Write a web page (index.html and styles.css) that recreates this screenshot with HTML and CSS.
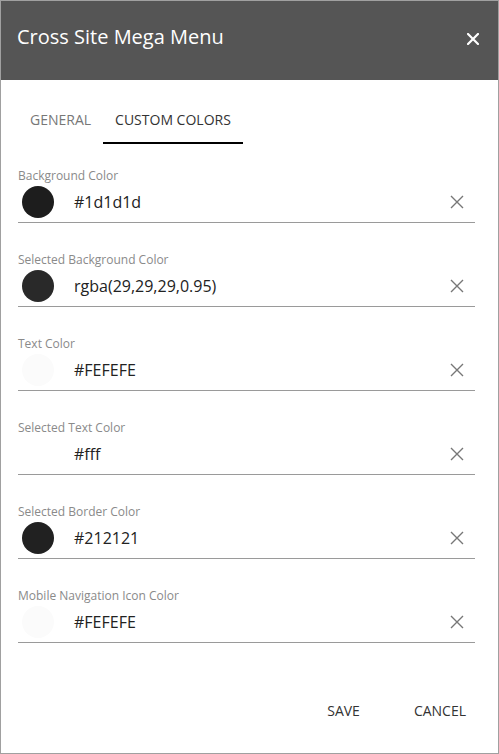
FILE: index.html
```html
<!DOCTYPE html>
<html>
<head>
<meta charset="utf-8">
<link rel="stylesheet" href="styles.css">
</head>
<body>
<div class="dialog">
  <header class="header">
    <h1 class="title">Cross Site Mega Menu</h1>
    <svg class="close" width="12" height="12" viewBox="0 0 12 12"><path d="M1 1L11 11M11 1L1 11" stroke="#fff" stroke-width="2.2" stroke-linecap="square"/></svg>
  </header>
  <nav class="tabs">
    <div class="tab">GENERAL</div>
    <div class="tab active">CUSTOM COLORS</div>
  </nav>
  <main class="fields">
    <div class="field">
      <div class="label">Background Color</div>
      <div class="row">
        <span class="swatch" style="background:#1d1d1d"></span>
        <span class="value">#1d1d1d</span>
        <svg class="clear" width="14" height="14" viewBox="0 0 14 14"><path d="M1 1L13 13M13 1L1 13" stroke="#777" stroke-width="1.4"/></svg>
      </div>
    </div>
    <div class="field">
      <div class="label">Selected Background Color</div>
      <div class="row">
        <span class="swatch" style="background:rgba(29,29,29,0.95)"></span>
        <span class="value">rgba(29,29,29,0.95)</span>
        <svg class="clear" width="14" height="14" viewBox="0 0 14 14"><path d="M1 1L13 13M13 1L1 13" stroke="#777" stroke-width="1.4"/></svg>
      </div>
    </div>
    <div class="field">
      <div class="label">Text Color</div>
      <div class="row">
        <span class="swatch" style="background:#fbfbfb"></span>
        <span class="value">#FEFEFE</span>
        <svg class="clear" width="14" height="14" viewBox="0 0 14 14"><path d="M1 1L13 13M13 1L1 13" stroke="#777" stroke-width="1.4"/></svg>
      </div>
    </div>
    <div class="field">
      <div class="label">Selected Text Color</div>
      <div class="row">
        <span class="swatch" style="background:#fff"></span>
        <span class="value">#fff</span>
        <svg class="clear" width="14" height="14" viewBox="0 0 14 14"><path d="M1 1L13 13M13 1L1 13" stroke="#777" stroke-width="1.4"/></svg>
      </div>
    </div>
    <div class="field">
      <div class="label">Selected Border Color</div>
      <div class="row">
        <span class="swatch" style="background:#212121"></span>
        <span class="value">#212121</span>
        <svg class="clear" width="14" height="14" viewBox="0 0 14 14"><path d="M1 1L13 13M13 1L1 13" stroke="#777" stroke-width="1.4"/></svg>
      </div>
    </div>
    <div class="field">
      <div class="label">Mobile Navigation Icon Color</div>
      <div class="row">
        <span class="swatch" style="background:#fbfbfb"></span>
        <span class="value">#FEFEFE</span>
        <svg class="clear" width="14" height="14" viewBox="0 0 14 14"><path d="M1 1L13 13M13 1L1 13" stroke="#777" stroke-width="1.4"/></svg>
      </div>
    </div>
  </main>
  <footer class="footer">
    <button class="btn">SAVE</button>
    <button class="btn">CANCEL</button>
  </footer>
</div>
</body>
</html>
```
FILE: styles.css
```css
* { box-sizing: border-box; }
html, body { margin: 0; padding: 0; background: #fff; }
body { font-family: "Open Sans", "Noto Sans", sans-serif; }
.dialog {
  width: 499px;
  height: 754px;
  border: 1px solid #a0a0a0;
  display: flex;
  flex-direction: column;
  background: #fff;
}
.header {
  height: 79px;
  flex: none;
  background: #555555;
  display: flex;
  justify-content: space-between;
  align-items: flex-start;
  padding: 22px 19px 0 16px;
}
.title {
  margin: 0;
  font-size: 20px;
  line-height: 28px;
  font-weight: 400;
  color: #fff;
}
.close { margin-top: 10px; display: block; }
.tabs {
  display: flex;
  padding: 20px 0 0 17px;
  flex: none;
}
.tab {
  font-size: 14px;
  line-height: 20px;
  padding: 10px 12px 12px;
  border-bottom: 2px solid transparent;
  color: #777;
}
.tab.active { color: #333; border-bottom-color: #000; }
.fields {
  flex: 1;
  padding: 24px 23px 0 17px;
  display: flex;
  flex-direction: column;
  gap: 29px;
}
.label {
  font-size: 12px;
  line-height: 16px;
  color: #8a8a8a;
}
.row {
  height: 39px;
  display: flex;
  align-items: center;
  border-bottom: 1px solid #9a9a9a;
  padding: 0 11px 2px 4px;
}
.swatch {
  width: 32px;
  height: 32px;
  border-radius: 50%;
  flex: none;
}
.value {
  flex: 1;
  margin-left: 20px;
  font-size: 16px;
  color: #222;
}
.clear { display: block; flex: none; }
.footer {
  height: 84px;
  flex: none;
  display: flex;
  justify-content: flex-end;
  align-items: center;
  gap: 22px;
  padding-right: 16px;
}
.btn {
  font-family: "Open Sans", "Noto Sans", sans-serif;
  font-size: 14px;
  line-height: 36px;
  padding: 0 16px;
  border: 0;
  background: transparent;
  color: #333;
}
```
